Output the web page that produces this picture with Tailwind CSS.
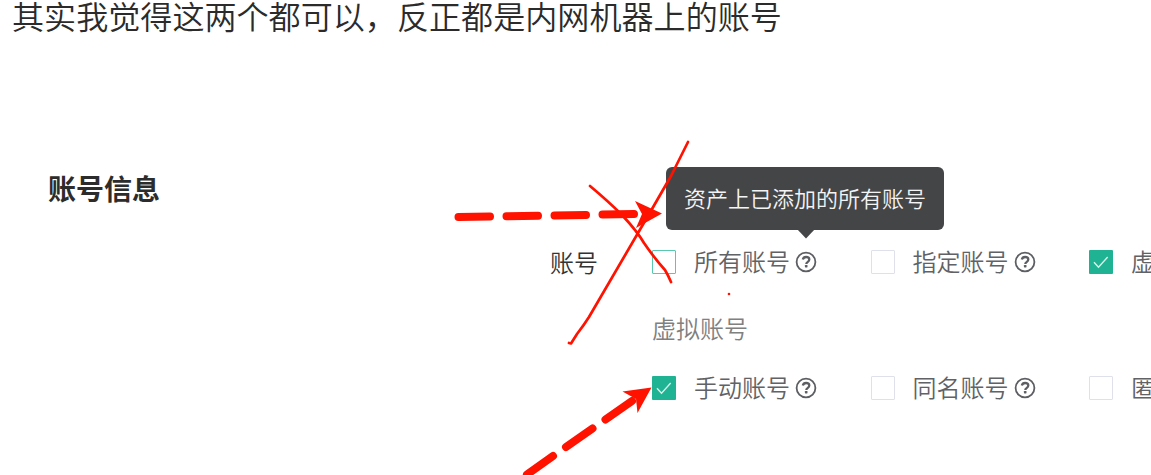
<!DOCTYPE html>
<html lang="zh-CN">
<head>
<meta charset="utf-8">
<title>账号信息</title>
<script src="https://cdn.jsdelivr.net/npm/@tailwindcss/browser@4"></script>
</head>
<body class="relative h-[475px] w-[1151px] overflow-hidden bg-white font-['Noto_Sans_CJK_SC',sans-serif] text-[#606266]">
<svg class="hidden">
  <symbol id="help" viewBox="0 0 22 22"><circle cx="11" cy="11" r="9.4" fill="none" stroke="#5c5e62" stroke-width="1.8"/><path d="M7.8 8.5C8.2 6.9 9.4 6 11.1 6c1.9 0 3.2 1 3.2 2.6 0 1.3-.8 1.9-1.7 2.5-.9.6-1.3 1-1.3 1.8" fill="none" stroke="#5c5e62" stroke-width="2.3"/><rect x="9.9" y="13.9" width="2.6" height="2.5" rx=".6" fill="#5c5e62"/></symbol>
  <symbol id="check" viewBox="0 0 24 24"><path d="M5 12.3l4.500 5L18.700 7" fill="none" stroke="#d5f2ea" stroke-width="1.4"/></symbol>
</svg>
<p class="h-[151px] pl-3 text-[32.1px] font-[350] leading-[30px] whitespace-nowrap text-[#2b2b2b]">其实我觉得这两个都可以，反正都是内网机器上的账号</p>
<section>
  <h2 class="h-[87px] pt-[17px] pl-[48px] text-[28px] leading-[40px] font-bold text-[#2c2c2c]">账号信息</h2>
  <div class="flex whitespace-nowrap text-2xl font-[350]">
    <div class="w-[652px] shrink-0 pl-[550px] leading-[48px] text-[#333]">账号</div>
    <div class="w-[499px] shrink-0">
      <div class="flex h-12 items-center">
        <div class="flex w-[218.5px] shrink-0 items-center"><span class="size-6 rounded-[1px] border border-[#5ac8ae]"></span><span class="ml-[18px] -mt-0.5">所有账号</span>
          <span class="relative ml-[5px]"><svg class="size-[22px]"><use href="#help"/></svg>
            <span class="absolute bottom-[43px] left-[10px] h-[63px] w-[278px] -translate-x-1/2 rounded-md bg-[#444547] text-center text-[22px] leading-[61px] text-[#f4f4f4]">资产上已添加的所有账号<svg class="absolute top-[62px] left-[131px] h-[10px] w-[18px]" viewBox="0 0 18 10"><path d="M0 0h18L9 9.500z" fill="#444547"/></svg></span>
          </span></div>
        <div class="flex w-[218.5px] shrink-0 items-center"><span class="size-6 rounded-[1px] border border-[#dfe1ea]"></span><span class="ml-[18px] -mt-0.5">指定账号</span><svg class="ml-[5px] size-[22px]"><use href="#help"/></svg></div>
        <div class="flex w-[62px] shrink-0 items-center overflow-hidden"><span class="size-6 shrink-0 rounded-[1px] bg-[#1fb393]"><svg class="size-6"><use href="#check"/></svg></span><span class="ml-[18px] -mt-0.5">虚拟账号</span></div>
      </div>
      <div class="h-[78px] pt-[18px] leading-[48px] text-[#808080]">虚拟账号</div>
      <div class="flex h-12 items-center">
        <div class="flex w-[218.5px] shrink-0 items-center"><span class="size-6 rounded-[1px] bg-[#1fb393]"><svg class="size-6"><use href="#check"/></svg></span><span class="ml-[18px] -mt-0.5">手动账号</span><svg class="ml-[5px] size-[22px]"><use href="#help"/></svg></div>
        <div class="flex w-[218.5px] shrink-0 items-center"><span class="size-6 rounded-[1px] border border-[#dfe1ea]"></span><span class="ml-[18px] -mt-0.5">同名账号</span><svg class="ml-[5px] size-[22px]"><use href="#help"/></svg></div>
        <div class="flex w-[62px] shrink-0 items-center overflow-hidden"><span class="size-6 shrink-0 rounded-[1px] border border-[#dfe1ea]"></span><span class="ml-[18px] -mt-0.5">匿名账号</span></div>
      </div>
    </div>
  </div>
</section>
<!-- hand-drawn annotations -->
<svg class="pointer-events-none absolute inset-0 h-[475px] w-[1151px]" viewBox="0 0 1151 475" fill="none" stroke="#ff1200" stroke-linecap="round" stroke-linejoin="round">
  <g stroke-width="8"><path d="M458.500 217L490 216.500M506.500 216.300L538 215.800M554.500 215.500L586 215M602.500 214.500L634 214"/><path d="M527 474.500L553 456M566 447L592.500 428.500M605.500 419.500L632 401"/></g>
  <path d="M635 201l27 12.500L636 228l6-14z" fill="#ff1200" stroke="none"/>
  <path d="M622.500 391.500L651.500 387.500L637.500 413L636 399z" fill="#ff1200" stroke="none"/>
  <path stroke-width="2.7" d="M688 142L671 176L652 209L589 317Q584 325 577 334L571 343.500L569 343M590 186Q608 201 622 215Q637 231 644 243Q655 259 665 270Q668 275 671 282"/>
  <circle cx="729" cy="294" r="1.300" fill="#ff1200" stroke="none"/>
</svg>
</body>
</html>
